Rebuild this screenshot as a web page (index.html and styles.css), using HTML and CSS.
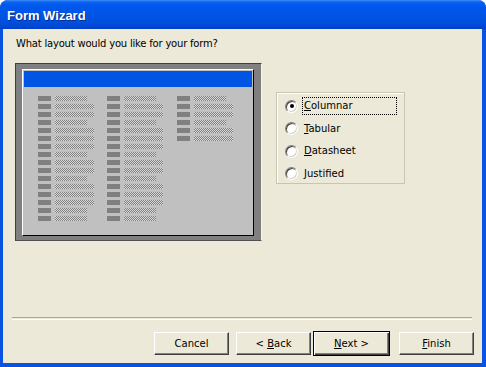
FILE: index.html
```html
<!DOCTYPE html>
<html lang="en">
<head>
  <meta charset="UTF-8" />
  <title>Form Wizard</title>
  <link rel="stylesheet" href="styles.css">
</head>
<body>
  <div class="window">
    <div class="titlebar">Form Wizard</div>

    <div class="client">
      <p class="prompt">What layout would you like for your form?</p>

      <div class="content">
        <div class="preview">
          <div class="sheet">
            <div class="sheet-bar"></div>
            <div class="cols">
              <div class="col">
                <div class="row"><i class="key"></i><i class="val"></i></div>
                <div class="row"><i class="key"></i><i class="val long"></i></div>
                <div class="row"><i class="key"></i><i class="val long"></i></div>
                <div class="row"><i class="key"></i><i class="val"></i></div>
                <div class="row"><i class="key"></i><i class="val long"></i></div>
                <div class="row"><i class="key"></i><i class="val long"></i></div>
                <div class="row"><i class="key"></i><i class="val long"></i></div>
                <div class="row"><i class="key"></i><i class="val"></i></div>
                <div class="row"><i class="key"></i><i class="val long"></i></div>
                <div class="row"><i class="key"></i><i class="val long"></i></div>
                <div class="row"><i class="key"></i><i class="val"></i></div>
                <div class="row"><i class="key"></i><i class="val long"></i></div>
                <div class="row"><i class="key"></i><i class="val long"></i></div>
                <div class="row"><i class="key"></i><i class="val long"></i></div>
                <div class="row"><i class="key"></i><i class="val"></i></div>
                <div class="row"><i class="key"></i><i class="val"></i></div>
              </div>
              <div class="col">
                <div class="row"><i class="key"></i><i class="val"></i></div>
                <div class="row"><i class="key"></i><i class="val long"></i></div>
                <div class="row"><i class="key"></i><i class="val long"></i></div>
                <div class="row"><i class="key"></i><i class="val"></i></div>
                <div class="row"><i class="key"></i><i class="val long"></i></div>
                <div class="row"><i class="key"></i><i class="val long"></i></div>
                <div class="row"><i class="key"></i><i class="val long"></i></div>
                <div class="row"><i class="key"></i><i class="val"></i></div>
                <div class="row"><i class="key"></i><i class="val long"></i></div>
                <div class="row"><i class="key"></i><i class="val long"></i></div>
                <div class="row"><i class="key"></i><i class="val"></i></div>
                <div class="row"><i class="key"></i><i class="val long"></i></div>
                <div class="row"><i class="key"></i><i class="val long"></i></div>
                <div class="row"><i class="key"></i><i class="val long"></i></div>
                <div class="row"><i class="key"></i><i class="val"></i></div>
                <div class="row"><i class="key"></i><i class="val"></i></div>
              </div>
              <div class="col">
                <div class="row"><i class="key"></i><i class="val"></i></div>
                <div class="row"><i class="key"></i><i class="val long"></i></div>
                <div class="row"><i class="key"></i><i class="val long"></i></div>
                <div class="row"><i class="key"></i><i class="val"></i></div>
                <div class="row"><i class="key"></i><i class="val long"></i></div>
                <div class="row"><i class="key"></i><i class="val long"></i></div>
              </div>
            </div>
          </div>
        </div>

        <div class="options">
          <div class="option"><span class="radio checked"></span><span class="label focus"><u>C</u>olumnar</span></div>
          <div class="option"><span class="radio"></span><span class="label"><u>T</u>abular</span></div>
          <div class="option"><span class="radio"></span><span class="label"><u>D</u>atasheet</span></div>
          <div class="option"><span class="radio"></span><span class="label"><u>J</u>ustified</span></div>
        </div>
      </div>

      <div class="separator"></div>

      <div class="buttons">
        <button class="btn cancel">Cancel</button>
        <button class="btn back">&lt; <u>B</u>ack</button>
        <button class="btn next"><u>N</u>ext &gt;</button>
        <button class="btn finish"><u>F</u>inish</button>
      </div>
    </div>
  </div>
</body>
</html>
```

FILE: styles.css
```css
body {
  margin: 0;
  background: #ffffff;
}
.window {
  width: 486px;
  height: 367px;
  box-sizing: border-box;
  background: #0a52e0;
  border-radius: 8px 8px 0 0;
  display: flex;
  flex-direction: column;
  overflow: hidden;
}
.titlebar {
  height: 29px;
  box-sizing: border-box;
  padding: 8px 0 0 7px;
  background: linear-gradient(#3c8ef9 0, #0f62ee 2px, #0058ee 5px, #0055e5 14px, #0050de 22px, #0046d0 27px, #003fc4 29px);
  color: #ffffff;
  font-family: "Liberation Sans", Arial, sans-serif;
  font-weight: bold;
  font-size: 13px;
  line-height: 16px;
  text-shadow: 1px 1px #0b2a8a;
}
.client {
  flex: 1;
  margin: 0 4px 4px 3px;
  background: #ece9d8;
  display: flex;
  flex-direction: column;
  font-family: "DejaVu Sans", Tahoma, sans-serif;
  font-size: 10px;
  color: #000000;
}
.prompt {
  margin: 8px 0 0 13px;
  line-height: 14px;
  letter-spacing: -0.2px;
}
.content {
  display: flex;
  align-items: flex-start;
  margin: 12px 0 0 12px;
}

/* preview picture */
.preview {
  width: 247px;
  height: 178px;
  box-sizing: border-box;
  background: #808080;
  border: 1px solid #404040;
  border-right-color: #f4f4f4;
  border-bottom-color: #505050;
  padding: 5px 7px 4px 6px;
}
.sheet {
  height: 100%;
  box-sizing: border-box;
  background: #c0c0c0;
  border: 1px solid #000000;
  border-top-color: #ffffff;
  border-left-color: #ffffff;
  padding: 1px 0 0 1px;
}
.sheet-bar {
  height: 16px;
  margin-right: 1px;
  background: #0055e5;
}
.cols {
  display: flex;
  padding: 9px 0 0 14px;
}
.col {
  width: 69px;
  display: flex;
  flex-direction: column;
  gap: 3px;
}
.col + .col {
  width: 70px;
}
.row {
  display: flex;
  height: 5px;
}
.key {
  width: 13px;
  height: 5px;
  background: #808080;
  margin-right: 4px;
}
.val {
  width: 32px;
  height: 5px;
  background: repeating-conic-gradient(#808080 0 25%, #d8d8d8 0 50%) 0 0 / 2px 2px;
}
.val.long {
  width: 39px;
}

/* layout choices */
.options {
  width: 129px;
  height: 92px;
  box-sizing: border-box;
  margin: 29px 0 0 14px;
  border: 1px solid #c8c5b5;
  box-shadow: inset 1px 1px #ffffff;
  padding: 2px 0 0 8px;
}
.option {
  display: flex;
  align-items: center;
  height: 22.5px;
}
.radio {
  position: relative;
  width: 11px;
  height: 11px;
  border-radius: 50%;
  background: #ffffff;
  border: 1px solid #808080;
  border-right-color: #ffffff;
  border-bottom-color: #ffffff;
  box-shadow: inset 1px 1px #404040, inset -1px -1px #d4d0c8;
  margin-right: 4px;
}
.radio.checked::after {
  content: "";
  position: absolute;
  left: 3.5px;
  top: 3.5px;
  width: 4px;
  height: 4px;
  border-radius: 50%;
  background: #000000;
}
.label {
  width: 91px;
  padding: 1px 1px;
  line-height: 14px;
  border: 1px solid transparent;
}
.label.focus {
  border: 1px dotted #000000;
}

.separator {
  margin: 76px 10px 0 9px;
  height: 1px;
  border-top: 1px solid #aca899;
  border-bottom: 1px solid #ffffff;
}

/* wizard buttons */
.buttons {
  display: flex;
  align-items: center;
  padding: 11px 0 0 151px;
}
.btn {
  width: 75px;
  height: 23px;
  box-sizing: border-box;
  background: #ece9d8;
  border: 1px solid #404040;
  border-top-color: #ffffff;
  border-left-color: #ffffff;
  box-shadow: inset -1px -1px #808080;
  font-family: "DejaVu Sans", Tahoma, sans-serif;
  font-size: 10px;
  color: #000000;
  padding: 0;
}
.back {
  margin-left: 7px;
}
.next {
  margin-left: 2px;
  width: 77px;
  height: 25px;
  border: 1px solid #000000;
  box-shadow: inset 1px 1px #ffffff, inset -1px -1px #404040, inset -2px -2px #808080;
}
.finish {
  margin-left: 9px;
}
```
